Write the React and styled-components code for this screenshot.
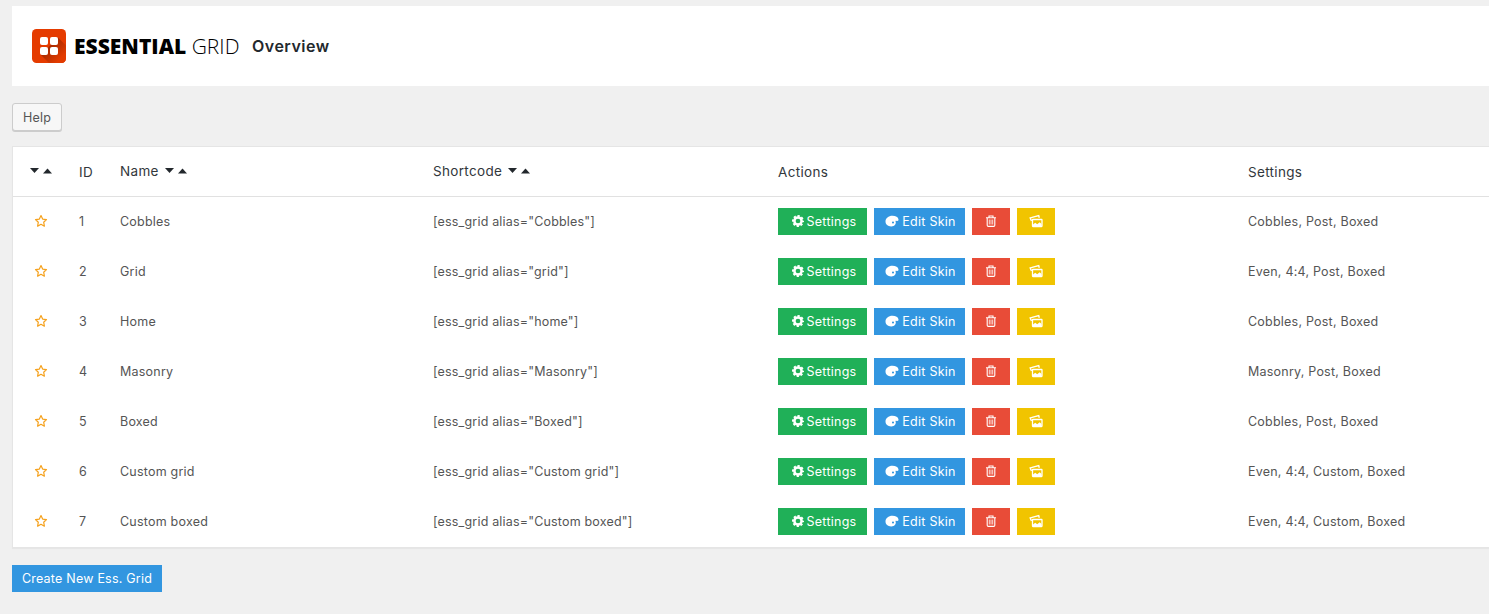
import React from 'react';
import styled, { createGlobalStyle } from 'styled-components';

const GlobalStyle = createGlobalStyle`
  * { box-sizing: border-box; }
  body {
    margin: 0;
    background: #f0f0f0;
    color: #555;
    font-family: Inter, "Liberation Sans", sans-serif;
    font-size: 12.5px;
    overflow: hidden;
  }
`;

const Page = styled.main`
  height: 614px;
  padding: 6px 0 0 12px;
  overflow: hidden;
`;

const Header = styled.header`
  display: flex;
  align-items: center;
  height: 80px;
  padding-left: 20px;
  background: #fff;
`;

const Brand = styled.div`
  margin-left: 8px;
  width: 167px;
  font: 300 21px/28px "Open Sans", sans-serif;
  letter-spacing: 0.02px;
  color: #000;
  white-space: nowrap;
  b { font-weight: 800; }
`;

const Title = styled.h1`
  margin: 0 0 0 11px;
  font-size: 16px;
  line-height: 20px;
  font-weight: 600;
  letter-spacing: 0.5px;
  color: #23282d;
`;

const HelpButton = styled.button`
  display: block;
  width: 50px;
  height: 28px;
  margin: 17px 0 15px;
  padding: 1px 0 0;
  border: 1px solid #ccc;
  border-radius: 3px;
  background: #f7f7f7;
  box-shadow: 0 1px 0 #ccc;
  font: 12.5px/25px Inter, sans-serif;
  letter-spacing: 0.2px;
  color: #555;
`;

const Table = styled.section`
  width: 1500px;
  height: 402px;
  border: 1px solid #e5e5e5;
  background: #fff;
  box-shadow: 0 1px 1px rgba(0, 0, 0, 0.04);
`;

const Row = styled.div`
  display: grid;
  grid-template-columns: 66px 41px 313px 345px 470px 1fr;
  align-items: center;
  height: 50px;
  padding-bottom: 1px;
  letter-spacing: 0.22px;
`;

const HeadRow = styled(Row)`
  padding-bottom: 0;
  border-bottom: 1px solid #e1e1e1;
  font-size: 13.5px;
  letter-spacing: 0.33px;
  color: #32373c;
`;

const Cell = styled.div`
  display: flex;
  align-items: center;
  white-space: nowrap;
  padding-left: ${(p) => p.$indent || 0}px;
  padding-bottom: ${(p) => p.$lift || 0}px;
`;

const CodeCell = styled(Cell)`
  letter-spacing: 0.18px;
`;

const Sorter = styled.svg`
  display: block;
  flex: none;
  margin-left: ${(p) => p.$gap || 0}px;
  margin-top: ${(p) => (p.$gap ? 1 : 0)}px;
`;

const Actions = styled.div`
  display: flex;
  gap: 7px;
`;

const tones = {
  green: '#20b058',
  blue: '#3296e0',
  red: '#e84c38',
  yellow: '#f1c400',
};

const Action = styled.button`
  display: flex;
  align-items: center;
  justify-content: center;
  gap: 3px;
  width: ${(p) => p.$width}px;
  height: 27px;
  padding: 0 0 0 ${(p) => p.$inset || 0}px;
  border: 0;
  background: ${(p) => tones[p.$tone]};
  color: #fff;
  font: 12.5px/27px Inter, sans-serif;
  letter-spacing: 0.25px;
  white-space: nowrap;
  svg { flex: none; margin-bottom: 1px; }
`;

const CreateButton = styled(Action)`
  margin-top: 17px;
  letter-spacing: 0.22px;
`;

const Logo = () => (
  <svg width="34" height="34" viewBox="0 0 34 34">
    <defs>
      <linearGradient id="shade" x1="0.3" y1="0.3" x2="0.8" y2="0.8">
        <stop offset="0" stopColor="#a32900" />
        <stop offset="1" stopColor="#e23b00" />
      </linearGradient>
    </defs>
    <rect width="34" height="34" rx="4.5" fill="#e53b00" />
    <path d="M26 8.5 34 16.5V29.5a4.5 4.5 0 0 1-4.5 4.5H17L9 26Z" fill="url(#shade)" />
    <g fill="#fff">
      <rect x="8" y="8" width="8" height="8" rx="2" />
      <rect x="18" y="8" width="8" height="8" rx="2" />
      <rect x="8" y="18" width="8" height="8" rx="2" />
      <rect x="18" y="18" width="8" height="8" rx="2" />
    </g>
  </svg>
);

const SortArrows = ({ gap }) => (
  <Sorter $gap={gap} width="22" height="6" viewBox="0 0 22 6" fill="#23282d">
    <path d="M0 0h9L4.5 5Z" />
    <path d="M13 5.500h9L17.5.500Z" />
  </Sorter>
);

const Star = () => (
  <svg width="14" height="14" viewBox="0 0 14 14" fill="none" stroke="#f5a11c" strokeWidth="1.2" strokeLinejoin="round">
    <path d="m7 1.500 1.650 3.550 3.850.5-2.800 2.700.7 3.950L7 10.250 3.600 12.200l.7-3.950-2.800-2.700 3.850-.5Z" />
  </svg>
);

const Gear = () => (
  <svg width="12" height="12" viewBox="0 0 12 12" fill="none" stroke="#fff">
    <circle cx="6" cy="6" r="3.6" strokeWidth="2.5" />
    <circle cx="6" cy="6" r="5" strokeWidth="2" strokeDasharray="2.2 1.727" strokeDashoffset="1.1" />
  </svg>
);

const Palette = () => (
  <svg width="14" height="12" viewBox="0 0 14 12" fill="#fff">
    <path
      fillRule="evenodd"
      d="M.5 6.600C.5 3.300 3.500.8 7.400.8c3.400 0 5.800 1.200 6.100 3.700.2 1.400-1 1.700-2.200 1.200-.6-.2-1 .2-.7.9.8 2.200-.8 4.900-4.400 4.900C2.800 11.500.5 9.400.5 6.600ZM8 6.500a1.050 1.050 0 1 0 0 2.100 1.050 1.050 0 0 0 0-2.100Z"
    />
  </svg>
);

const Trash = () => (
  <svg width="12" height="12" viewBox="0 0 12 12" fill="none" stroke="#fff">
    <path d="M1 2.800h10M4 2.500V1h4v1.500M2.200 3v7.200q0 1.200 1.200 1.200h5.200q1.200 0 1.200-1.200V3" strokeWidth="1.100" />
    <path d="M4.300 4.500v5M6 4.500v5M7.700 4.500v5" strokeWidth=".8" />
  </svg>
);

const Pictures = () => (
  <svg width="14" height="14" viewBox="0 0 14 14" fill="none" stroke="#fff">
    <path d="M2.500 7 1.200 3.900 9.700 1.500l.6 2.200" strokeWidth="1.400" />
    <rect x="3.500" y="5.500" width="9.500" height="7" rx=".4" strokeWidth="1.300" />
    <path d="M4 12v-1.500L6.200 8.800 8.200 10.300 10.700 8.300 12.500 10v2Z" fill="#fff" stroke="none" />
  </svg>
);

const grids = [
  ['Cobbles', 'Cobbles', 'Cobbles, Post, Boxed'],
  ['Grid', 'grid', 'Even, 4:4, Post, Boxed'],
  ['Home', 'home', 'Cobbles, Post, Boxed'],
  ['Masonry', 'Masonry', 'Masonry, Post, Boxed'],
  ['Boxed', 'Boxed', 'Cobbles, Post, Boxed'],
  ['Custom grid', 'Custom grid', 'Even, 4:4, Custom, Boxed'],
  ['Custom boxed', 'Custom boxed', 'Even, 4:4, Custom, Boxed'],
];

export default function App() {
  return (
    <>
      <GlobalStyle />
      <Page>
        <Header>
          <Logo />
          <Brand><b>ESSENTIAL</b> GRID</Brand>
          <Title>Overview</Title>
        </Header>
        <HelpButton>Help</HelpButton>
        <Table>
          <HeadRow>
            <Cell $indent={17} $lift={1}><SortArrows /></Cell>
            <Cell>ID</Cell>
            <Cell $lift={2}>Name<SortArrows gap={6} /></Cell>
            <Cell $lift={2}>Shortcode<SortArrows gap={6} /></Cell>
            <Cell>Actions</Cell>
            <Cell>Settings</Cell>
          </HeadRow>
          {grids.map(([name, alias, settings], i) => (
            <Row key={name}>
              <Cell $indent={21} $lift={1}><Star /></Cell>
              <Cell>{i + 1}</Cell>
              <Cell>{name}</Cell>
              <CodeCell>{`[ess_grid alias="${alias}"]`}</CodeCell>
              <Actions>
                <Action $tone="green" $width={89} $inset={3}><Gear />Settings</Action>
                <Action $tone="blue" $width={91} $inset={2}><Palette />Edit Skin</Action>
                <Action $tone="red" $width={38} aria-label="Delete"><Trash /></Action>
                <Action $tone="yellow" $width={38} aria-label="Duplicate"><Pictures /></Action>
              </Actions>
              <Cell>{settings}</Cell>
            </Row>
          ))}
        </Table>
        <CreateButton $tone="blue" $width={150}>Create New Ess. Grid</CreateButton>
      </Page>
    </>
  );
}
